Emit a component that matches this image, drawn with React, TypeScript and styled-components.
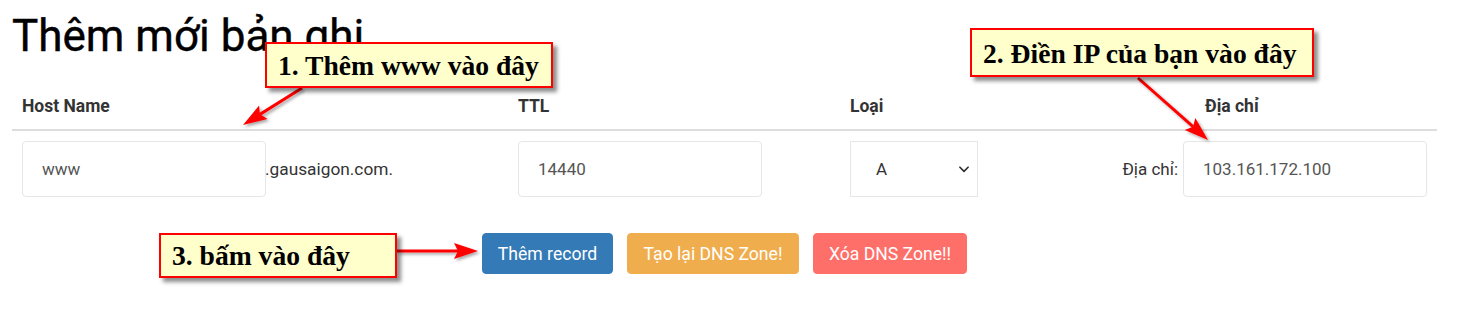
import React from "react";
import styled, { createGlobalStyle } from "styled-components";

const GlobalStyle = createGlobalStyle`
  html, body { margin: 0; padding: 0; background: #ffffff; }
  body { font-family: Roboto, "Liberation Sans", Arial, sans-serif; color: #333; }
  * { box-sizing: border-box; }
`;

const Page = styled.div`
  position: relative;
  width: 1469px;
  height: 317px;
  padding: 12px 32px 0 12px;
  overflow: hidden;
`;

const Title = styled.h1`
  margin: 0;
  font-family: Roboto, sans-serif;
  font-weight: 400;
  font-size: 44px;
  line-height: 48px;
  color: #000;
  -webkit-text-stroke: 0.4px #000;
`;

const Table = styled.div`
  margin-top: 27px;
  width: 1425px;
`;

const Grid = styled.div<{ $head?: boolean }>`
  display: grid;
  grid-template-columns: 496px 332px 272px 325px;
  border-bottom: ${(p) => (p.$head ? "2px solid #dddddd" : "none")};
`;

const HeadCell = styled.div<{ $indent?: number }>`
  padding: 8px 10px 12px 10px;
  padding-left: ${(p) => 10 + (p.$indent || 0)}px;
  font-size: 17.5px;
  line-height: 22px;
  font-weight: 700;
  color: #333;
`;

const Cell = styled.div<{ $end?: boolean }>`
  padding: 10px;
  display: flex;
  align-items: center;
  gap: 5px;
  justify-content: ${(p) => (p.$end ? "flex-end" : "flex-start")};
  font-size: 16px;
  color: #333;
`;

const Input = styled.div`
  width: 244px;
  height: 56px;
  border: 1px solid #e6e6e6;
  border-radius: 4px;
  padding: 0 19px;
  display: flex;
  align-items: center;
  font-size: 17px;
  color: #555;
  background: #fff;
`;

const Suffix = styled.span`
  font-size: 17.3px;
  color: #333;
  margin-left: -6px;
`;

const Label = styled.span`
  font-size: 17px;
  color: #333;
`;

const SelectBox = styled.div`
  width: 128px;
  height: 56px;
  border: 1px solid #e6e6e6;
  display: flex;
  align-items: center;
  justify-content: space-between;
  padding: 0 6px 0 25px;
  font-size: 17px;
  color: #333;
  background: #fff;
`;

const Actions = styled.div`
  margin-top: 26px;
  width: 1425px;
  display: flex;
  justify-content: center;
  gap: 14px;
`;

const Button = styled.button<{ $bg: string; $w: number }>`
  width: ${(p) => p.$w}px;
  height: 41px;
  border: 1px solid ${(p) => p.$bg};
  border-radius: 4px;
  background: ${(p) => p.$bg};
  color: #fff;
  font-family: Roboto, sans-serif;
  font-size: 17.6px;
  padding: 0;
  white-space: nowrap;
`;

const Callout = styled.div<{ $x: number; $y: number; $w: number; $h: number; $pt?: number }>`
  position: absolute;
  left: ${(p) => p.$x}px;
  top: ${(p) => p.$y}px;
  width: ${(p) => p.$w}px;
  height: ${(p) => p.$h}px;
  background: #ffffcc;
  border: 2px solid #ff0000;
  box-shadow: 4px 4px 4px rgba(0, 0, 0, 0.45);
  padding: ${(p) => p.$pt || 0}px 0 0 11px;
  font-family: "Liberation Serif", "Times New Roman", serif;
  font-weight: 700;
  font-size: 27.6px;
  line-height: ${(p) => p.$h - 4 - (p.$pt || 0)}px;
  color: #000;
  white-space: nowrap;
`;

const Overlay = styled.svg`
  position: absolute;
  left: 0;
  top: 0;
  pointer-events: none;
`;

type Arrow = { x1: number; y1: number; x2: number; y2: number };

const arrows: Arrow[] = [
  { x1: 302, y1: 88, x2: 243, y2: 125 },
  { x1: 1138, y1: 78, x2: 1208, y2: 140 },
  { x1: 397, y1: 251, x2: 478, y2: 251 },
];

function ArrowShape({ a }: { a: Arrow }) {
  const dx = a.x2 - a.x1;
  const dy = a.y2 - a.y1;
  const len = Math.sqrt(dx * dx + dy * dy);
  const ux = dx / len;
  const uy = dy / len;
  const hl = 24;
  const hw = 8;
  const bx = a.x2 - ux * hl;
  const by = a.y2 - uy * hl;
  const px = -uy;
  const py = ux;
  const notch = 4;
  const nx = a.x2 - ux * (hl - notch);
  const ny = a.y2 - uy * (hl - notch);
  const pts = `${a.x2},${a.y2} ${bx + px * hw},${by + py * hw} ${nx},${ny} ${bx - px * hw},${by - py * hw}`;
  return (
    <g filter="url(#sh)">
      <line x1={a.x1} y1={a.y1} x2={nx} y2={ny} stroke="#ff0000" strokeWidth={3} />
      <polygon points={pts} fill="#ff0000" />
    </g>
  );
}

export default function App() {
  return (
    <>
      <GlobalStyle />
      <Page>
        <Title>Thêm mới bản ghi</Title>
        <Table>
          <Grid $head>
            <HeadCell>Host Name</HeadCell>
            <HeadCell>TTL</HeadCell>
            <HeadCell>Loại</HeadCell>
            <HeadCell $indent={83}>Địa chỉ</HeadCell>
          </Grid>
          <Grid>
            <Cell>
              <Input>www</Input>
              <Suffix>.gausaigon.com.</Suffix>
            </Cell>
            <Cell>
              <Input>14440</Input>
            </Cell>
            <Cell>
              <SelectBox>
                <span>A</span>
                <svg width="14" height="14" viewBox="0 0 24 24" fill="none" stroke="#333" strokeWidth="3" strokeLinecap="round" strokeLinejoin="round">
                  <path d="M5 9l7 7 7-7" />
                </svg>
              </SelectBox>
            </Cell>
            <Cell $end>
              <Label>Địa chỉ:</Label>
              <Input>103.161.172.100</Input>
            </Cell>
          </Grid>
        </Table>
        <Actions>
          <Button $bg="#337ab7" $w={131}>Thêm record</Button>
          <Button $bg="#f0ad4e" $w={172}>Tạo lại DNS Zone!</Button>
          <Button $bg="#ff6f69" $w={154}>Xóa DNS Zone!!</Button>
        </Actions>

        <Overlay width="1469" height="317" viewBox="0 0 1469 317">
          <defs>
            <filter id="sh" x="-20%" y="-20%" width="140%" height="140%">
              <feDropShadow dx="2" dy="2" stdDeviation="1.5" floodColor="#000" floodOpacity="0.35" />
            </filter>
          </defs>
          {arrows.map((a, i) => (
            <ArrowShape key={i} a={a} />
          ))}
        </Overlay>

        <Callout $x={265} $y={42} $w={288} $h={46} $pt={1}>1. Thêm www vào đây</Callout>
        <Callout $x={970} $y={28} $w={344} $h={49} $pt={2}>2. Điền IP của bạn vào đây</Callout>
        <Callout $x={159} $y={233} $w={238} $h={45} $pt={1}>3. bấm vào đây</Callout>
      </Page>
    </>
  );
}
